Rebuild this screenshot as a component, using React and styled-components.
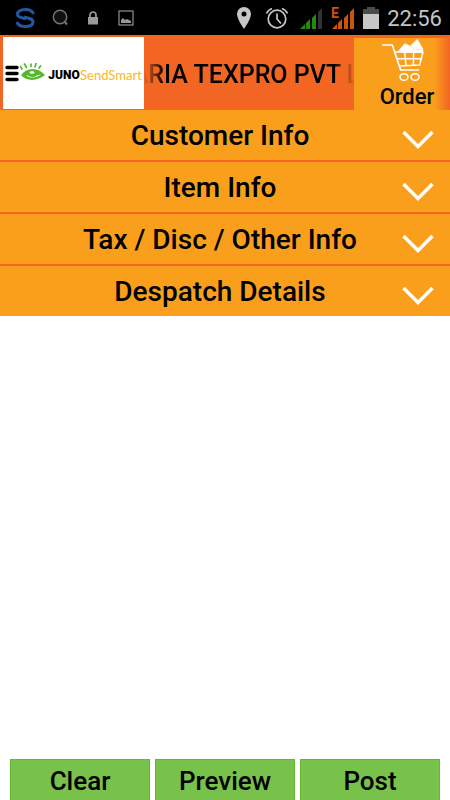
import React from "react";
import styled, { createGlobalStyle } from "styled-components";

const GlobalStyle = createGlobalStyle`
  * { box-sizing: border-box; }
  body { margin: 0; background: #fff; font-family: Roboto, "Liberation Sans", sans-serif; color: #000; }
  button { font: inherit; color: inherit; border: 0; padding: 0; cursor: pointer; }
  svg { flex: none; }
`;

const Screen = styled.div`
  min-height: 100vh;
  display: flex;
  flex-direction: column;
`;

const StatusBar = styled.div`
  height: 35px;
  padding: 0 8px 0 15px;
  background: #000;
  display: flex;
  align-items: center;
  justify-content: space-between;
`;

const Notices = styled.div`
  display: flex;
  align-items: center;
  gap: 17px;
`;

const Indicators = styled.div`
  display: flex;
  align-items: center;
  gap: 8px;
`;

const Clock = styled.time`
  font-size: 22px;
  line-height: 35px;
  padding-top: 2px;
  color: #c4c4c4;
`;

const Header = styled.header`
  height: 75px;
  padding: 2px 0 0 3px;
  background: #f26522;
  display: flex;
`;

const MenuButton = styled.button`
  flex: none;
  width: 141px;
  height: 72px;
  padding: 0 2px;
  background: #fff;
  display: flex;
  align-items: center;
`;

const Brand = styled.span`
  margin-left: 2px;
  width: 32px;
  padding-top: 4px;
  font: 900 12px/16px Roboto, sans-serif;
`;

const BrandLight = styled.span`
  padding-top: 4px;
  font: 400 13px/16px Lato, sans-serif;
  color: #fbb820;
`;

const Company = styled.h1`
  flex: 1;
  min-width: 0;
  margin: 0;
  padding: 2px 6px 0 0;
  display: flex;
  align-items: center;
  justify-content: center;
  overflow: hidden;
  white-space: nowrap;
  font-size: 25px;
  font-weight: 500;
  mask-image: linear-gradient(90deg, transparent, #000 20px, #000 calc(100% - 20px), transparent);
`;

const OrderButton = styled.button`
  flex: none;
  width: 96px;
  margin-top: 1px;
  background: linear-gradient(90deg, #f99f1c 80px, #f26522 96px);
  display: flex;
  flex-direction: column;
  align-items: center;
  font-size: 22px;
  line-height: 28px;
  font-weight: 500;
`;

const OrderLabel = styled.span`
  padding-left: 10px;
`;

const Sections = styled.div`
  display: grid;
  gap: 2px;
  background: #f26522;
`;

const SectionButton = styled.button`
  height: 50px;
  padding: 0 16px 0 6px;
  background: #f99f1c;
  display: grid;
  grid-template-columns: 32px 1fr 32px;
  align-items: center;
  font-size: 28px;
  line-height: 32px;
  font-weight: 500;
`;

const SectionTitle = styled.span`
  grid-column: 2;
  padding-top: 2px;
`;

const Chevron = styled.svg`
  margin-top: 10px;
`;

const Content = styled.main`
  flex: 1;
`;

const Actions = styled.footer`
  padding: 0 10px;
  display: grid;
  grid-template-columns: repeat(3, 1fr);
  gap: 5px;
`;

const ActionButton = styled.button`
  height: 41px;
  padding-top: 2px;
  background: #78c24b;
  border: solid #66b82c;
  border-width: 1px 1px 0;
  font-size: 26px;
  line-height: 32px;
  font-weight: 500;
`;

const MessengerIcon = () => (
  <svg width="20" height="22" viewBox="0 0 20 22" fill="none" stroke="#2655a0" strokeLinecap="butt">
    <path d="M18.500 7C17 2.500 13 2.500 10.500 2.500C6 2.500 2.500 4 2.500 7.500C2.500 11 8 10.500 11 12" strokeWidth="3" />
    <path d="M9 10C13 11 18 11.500 18 15C18 18.500 14 19.500 10 19.500C6 19.500 3 18.500 2 15" strokeWidth="3" />
  </svg>
);

const BubbleIcon = () => (
  <svg width="18" height="18" viewBox="0 0 18 18" fill="none" stroke="#747474" strokeWidth="1.500">
    <circle cx="8" cy="8" r="6.700" fill="#101010" />
    <path d="M12.500 12.500L15 15.500" strokeWidth="2" />
  </svg>
);

const LockIcon = () => (
  <svg width="12" height="14" viewBox="0 0 12 14">
    <rect x="1" y="6" width="10" height="7.500" fill="#999" />
    <path d="M3 6V4A3 3 0 0 1 9 4V6" fill="none" stroke="#999" strokeWidth="1.700" />
  </svg>
);

const PictureIcon = () => (
  <svg width="18" height="16" viewBox="0 0 18 16">
    <rect x="3" y="1" width="14" height="14" fill="none" stroke="#858585" strokeWidth="1.300" />
    <path d="M5 13V10L7 8L9 10L11 9L13 10L15 11V13Z" fill="#999" />
  </svg>
);

const PinIcon = () => (
  <svg width="20" height="24" viewBox="0 0 20 24">
    <path fillRule="evenodd" fill="#c6c6c6" d="M8 1A7 7 0 0 0 1 8C1 13 8 23 8 23S15 13 15 8A7 7 0 0 0 8 1ZM8 5.500A2.500 2.500 0 1 1 8 10.500A2.500 2.500 0 0 1 8 5.500Z" />
  </svg>
);

const AlarmIcon = () => (
  <svg width="27" height="24" viewBox="0 0 27 24" fill="none" stroke="#c6c6c6" strokeWidth="1.700">
    <circle cx="13" cy="13" r="8.800" />
    <path d="M13 7.500V13L17 17.500M2.500 7.500Q4 4 8 2.500M23.500 7.500Q22 4 18 2.500" />
  </svg>
);

const SignalIcon = ({ color, last, network }) => (
  <svg width="24" height="24" viewBox="0 0 24 24">
    <path d="M1 23L6 18V23ZM7 17L11 13V23H7ZM13 12L17 8V23H13Z" fill={color} />
    <path d="M19 6L23 2V23H19Z" fill={last} />
    {network && <text x="0" y="12" fontSize="14" fontWeight="700" fontFamily="Roboto" fill={color}>E</text>}
  </svg>
);

const BatteryIcon = () => (
  <svg width="16" height="22" viewBox="0 0 16 22">
    <path d="M4 0H12V2H16V7H0V2H4Z" fill="#4b4b4b" />
    <path d="M0 7H16V22H0Z" fill="#c6c6c6" />
  </svg>
);

const MenuIcon = () => (
  <svg width="15" height="17" viewBox="0 0 15 17" stroke="#000" strokeWidth="3.400" strokeLinecap="round">
    <path d="M2 2.500H12M2 8.500H12M2 14.500H12" />
  </svg>
);

const EyeIcon = () => (
  <svg width="26" height="20" viewBox="0 0 26 20">
    <path d="M1 12C7 4 18 4 25 12C18 18 7 19 1 12Z" fill="#54b82d" />
    <path d="M6 12C10 13.500 16 13.500 21 11C18 15 10 16 6 12Z" fill="#fff" />
    <ellipse cx="12.500" cy="11" rx="4.500" ry="3" fill="#54b82d" />
    <ellipse cx="12" cy="9.500" rx="2.500" ry="1.300" fill="#fff" />
    <path d="M2 6L0.500 3.500M6.500 4.500L4.500 1M11 3.500V1M15 4L16 0.500M19 5L20.500 3" stroke="#54b82d" strokeWidth="1.700" strokeLinecap="round" />
  </svg>
);

const CartIcon = () => (
  <svg width="45" height="45" viewBox="90 9 135 135" fill="none" stroke="#fff" strokeWidth="4.500" strokeLinejoin="round" strokeLinecap="round">
    <path d="M144 50L164 26L181 33L202 13L219 43L216 52Z" fill="#fff" strokeWidth="2" />
    <path d="M182 34L192 43L213 43" stroke="#f8c67c" strokeWidth="1.500" />
    <path d="M98 30H127L152 105H206" strokeWidth="5" />
    <path d="M136 51H219L209 90L148 93M140 71H214M164 51L168 91M191 51L190 91" />
    <ellipse cx="162" cy="126" rx="12" ry="10" />
    <ellipse cx="195" cy="126" rx="12" ry="10" />
  </svg>
);

const sections = ["Customer Info", "Item Info", "Tax / Disc / Other Info", "Despatch Details"];
const actions = ["Clear", "Preview", "Post"];

export default function App() {
  return (
    <Screen>
      <GlobalStyle />
      <StatusBar>
        <Notices>
          <MessengerIcon />
          <BubbleIcon />
          <LockIcon />
          <PictureIcon />
        </Notices>
        <Indicators>
          <PinIcon />
          <AlarmIcon />
          <SignalIcon color="#238b0c" last="#333" />
          <SignalIcon color="#cc540c" last="#cc540c" network />
          <BatteryIcon />
          <Clock>22:56</Clock>
        </Indicators>
      </StatusBar>
      <Header>
        <MenuButton aria-label="Menu">
          <MenuIcon />
          <EyeIcon />
          <Brand>JUNO</Brand>
          <BrandLight>SendSmart</BrandLight>
        </MenuButton>
        <Company>ARIA TEXPRO PVT L</Company>
        <OrderButton>
          <CartIcon />
          <OrderLabel>Order</OrderLabel>
        </OrderButton>
      </Header>
      <Sections>
        {sections.map((title) => (
          <SectionButton key={title} aria-expanded="false">
            <SectionTitle>{title}</SectionTitle>
            <Chevron width="32" height="20" viewBox="0 0 32 20" fill="none" stroke="#fff" strokeWidth="3.500">
              <path d="M1.500 2L16 16.500L30.500 2" />
            </Chevron>
          </SectionButton>
        ))}
      </Sections>
      <Content />
      <Actions>
        {actions.map((label) => (
          <ActionButton key={label}>{label}</ActionButton>
        ))}
      </Actions>
    </Screen>
  );
}
